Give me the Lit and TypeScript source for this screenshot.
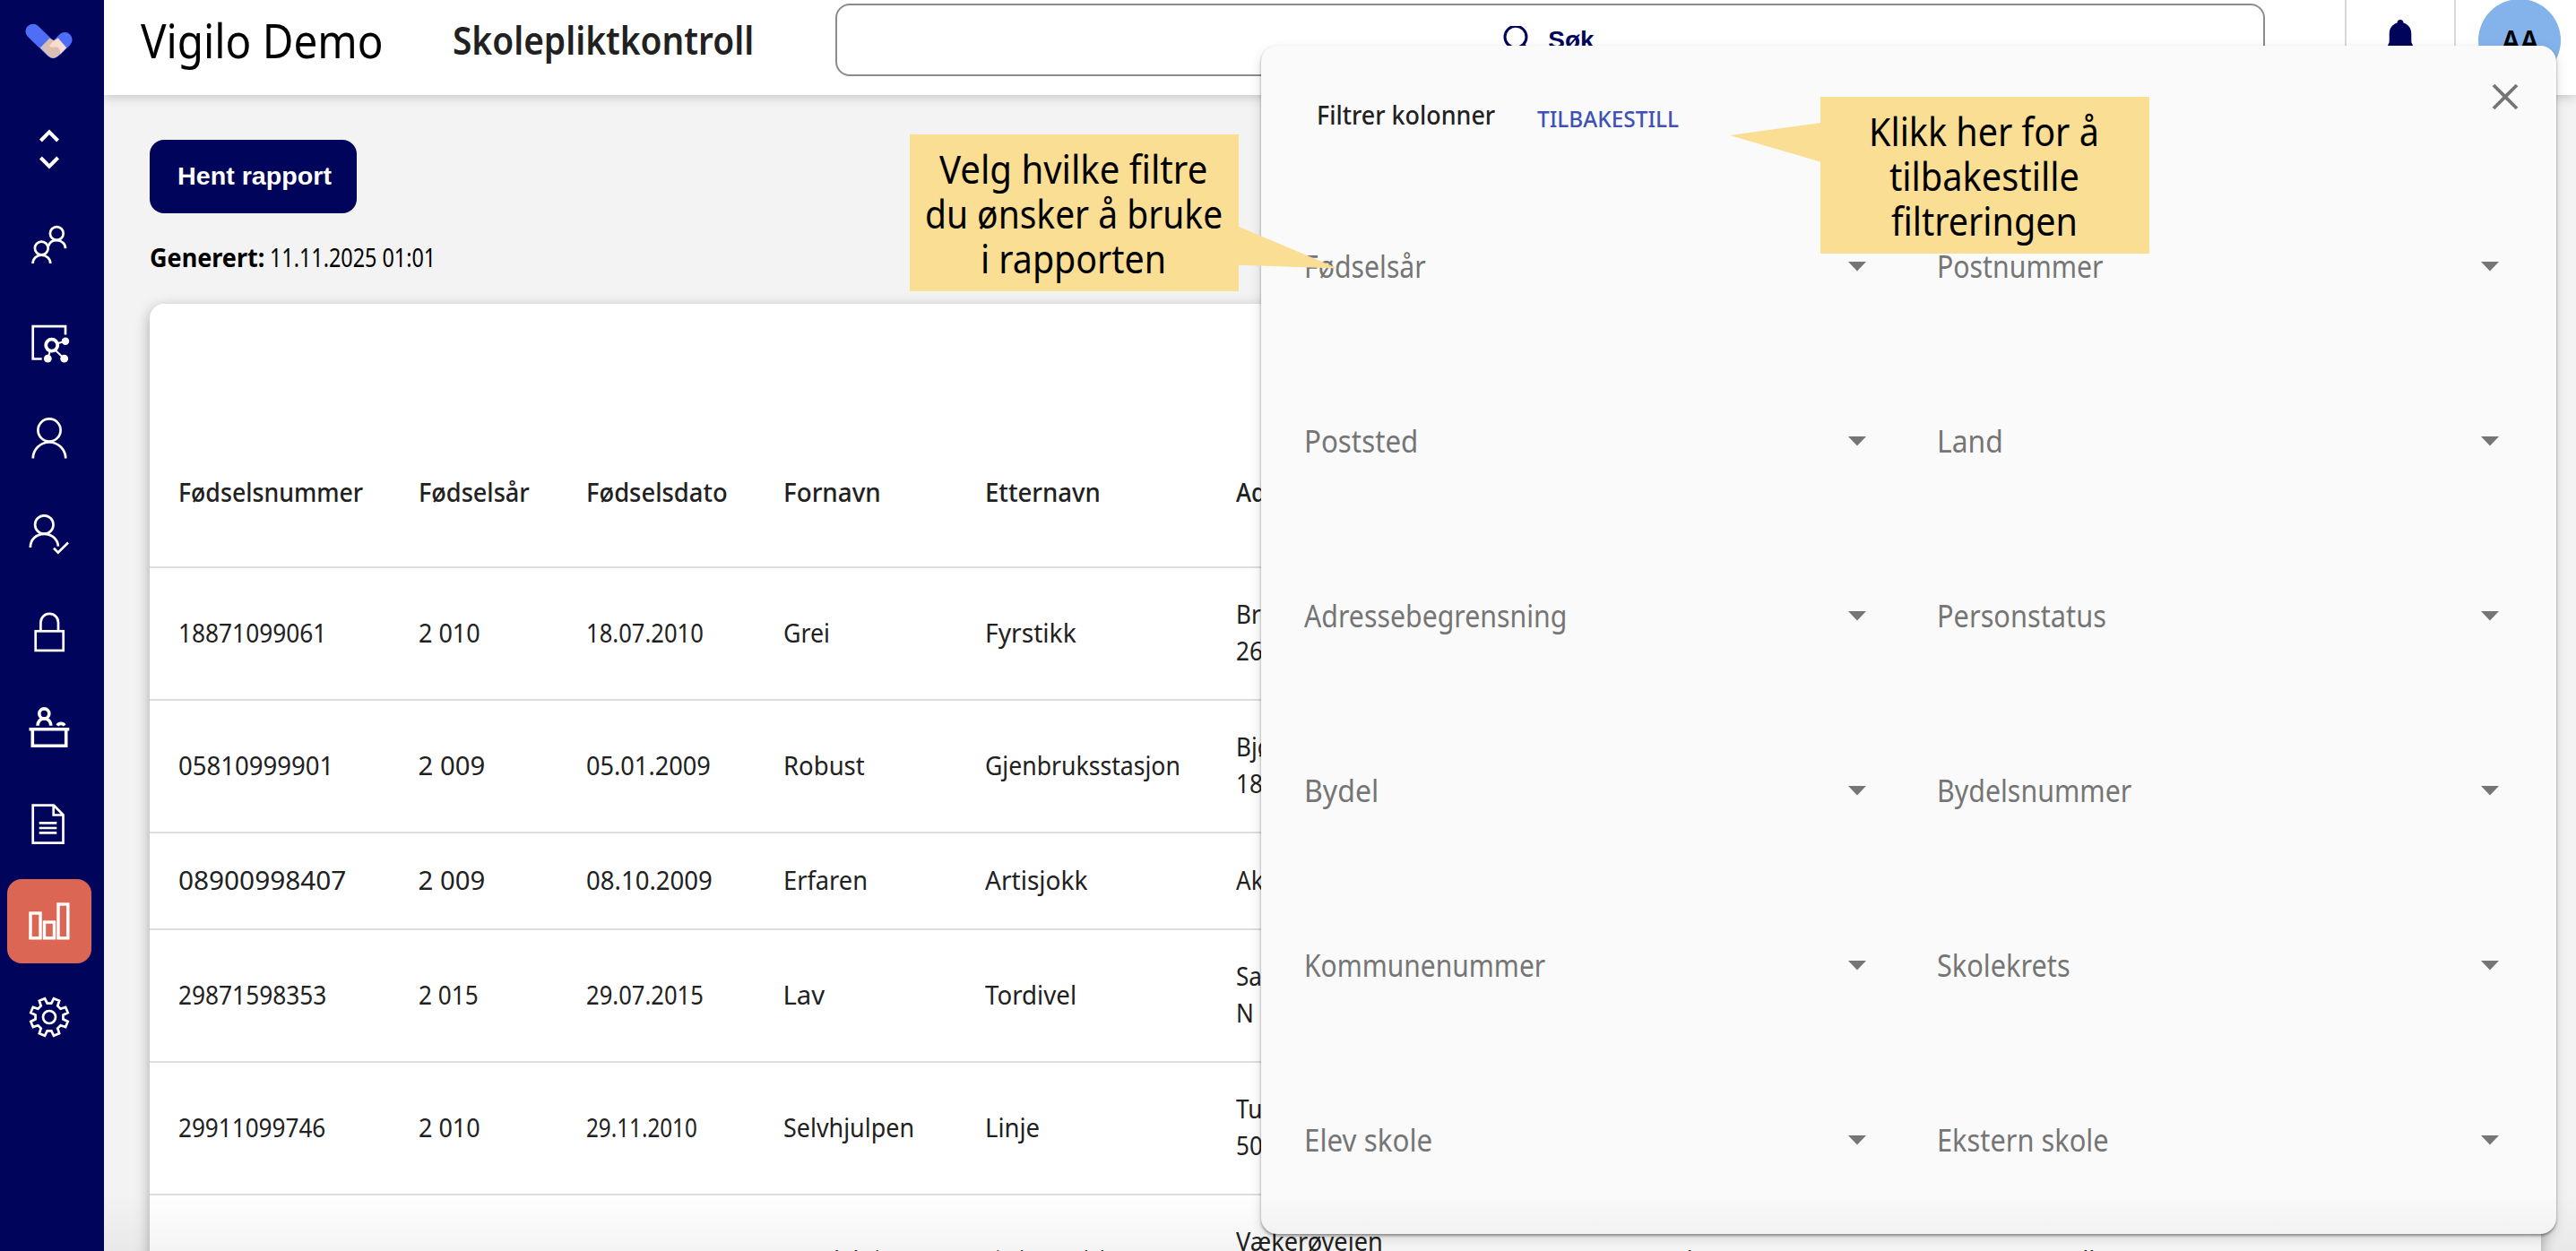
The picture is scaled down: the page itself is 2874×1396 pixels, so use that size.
import { LitElement, html, svg, css } from "lit";
import { customElement, property } from "lit/decorators.js";

const DEFAULT_CONDENSE = 0.89;

/** Text condensed horizontally so that it fills a given measure. */
@customElement("fit-text")
class FitText extends LitElement {
  @property({ type: Number }) w = 0;
  @property() text = "";

  static styles = css`
    :host {
      display: inline-block;
      white-space: nowrap;
    }
    .run {
      display: inline-block;
      white-space: pre;
      transform-origin: 0 50%;
    }
  `;

  updated() {
    const run = this.renderRoot.querySelector(".run") as HTMLElement;
    const natural = run.offsetWidth;
    const width = this.w || natural * DEFAULT_CONDENSE;
    run.style.transform = `scaleX(${width / natural})`;
    this.style.width = width + "px";
  }

  render() {
    return html`<span class="run">${this.text}</span>`;
  }
}

const fit = (text: string, w = 0) => html`<fit-text .text=${text} .w=${w}></fit-text>`;

function gearPath(): string {
  const pts: string[] = [];
  const at = (deg: number, r: number) => {
    const a = (deg * Math.PI) / 180;
    pts.push(`${(r * Math.sin(a)).toFixed(2)},${(-r * Math.cos(a)).toFixed(2)}`);
  };
  for (let k = 0; k < 8; k++) {
    const d = k * 45;
    at(d + 8.5, 15.6);
    at(d + 13.5, 21.3);
    at(d + 31.5, 21.3);
    at(d + 36.5, 15.6);
  }
  return "M" + pts.join("L") + "Z";
}

const NAV = [
  { id: "switch", art: svg`<path stroke-width="4" d="M-9.6-9 0-18.6 9.6-9M-9.6 10 0 19.6 9.6 10"/>` },
  {
    id: "groups",
    art: svg`<circle cx="8.3" cy="-13.5" r="7.4"/><path d="M18 3.2C18-2 13.6-5.8 8.3-5.8 3.4-5.8 .2-3 -1 .6"/>
      <circle cx="-8.7" cy="3" r="7.4"/><path d="M-18.4 20C-18.4 14.5-14 10.6-8.7 10.6-3.4 10.6 1.2 14.5 1.2 20"/>`,
  },
  {
    id: "network",
    art: svg`<path d="M-8.3 18.5H-18.3V-17.8H18V-8.5"/><circle cx="2.7" cy="3.2" r="6.5" stroke-width="3.8"/>
      <path stroke-width="2" d="M9 1.2 18-1.2M6.5 8.5 16.7 18.2M1 9-1.7 18.2"/>
      <g fill="#fff" stroke="none"><circle cx="18" cy="-1.2" r="4.2"/><circle cx="16.7" cy="18.2" r="4.4"/><circle cx="-1.7" cy="18.2" r="4.4"/></g>`,
  },
  { id: "person", art: svg`<circle cx="0" cy="-9" r="12.6"/><path d="M-18.2 22.5A18.2 18 0 0 1 18.2 22.5"/>` },
  {
    id: "approved",
    art: svg`<circle cx="-5.7" cy="-11.5" r="10.2"/><path d="M-21.2 14C-21.2 5-14.5-1.2-5.7-1.2 3-1.2 9.2 5 10 12.6M5 14.8 9.8 19.7 21 8.5"/>`,
  },
  {
    id: "lock",
    art: svg`<rect x="-15.3" y="-.7" width="31" height="21.6"/><path d="M-9.6-1V-10.3A9.8 9.8 0 0 1 10-10.3V-1"/>`,
  },
  {
    id: "desk",
    art: svg`<g stroke-width="3.6"><circle cx="-5.7" cy="-15.6" r="5.5"/><path d="M-13-2.3A7.4 8 0 0 1 1.8-2.3M9-2.3A4.6 4.6 0 0 1 17-2.3"/>
      <path d="M-22.5 1.7H22.3M-18.7 2V20.2H18.7V2"/></g>`,
  },
  {
    id: "document",
    art: svg`<path d="M-18.3-21.3H5L15.5-10.8V20.7H-18.3ZM4.7-21V-10.5H15.5"/><path d="M-11.3-1.7H8.3M-11.3 4H8.3M-11.3 9.4H8.3"/>`,
  },
  {
    id: "reports",
    active: true,
    art: svg`<g stroke-width="3.4"><rect x="-21" y="-9" width="11" height="27.8"/><rect x="-5.5" y="1" width="11" height="17.8"/><rect x="10" y="-19" width="10.8" height="37.8"/></g>`,
  },
  { id: "settings", art: svg`<path d=${gearPath()}/><circle r="7"/>` },
];

type Cell = [string, number?];
const HEAD: Cell[] = [["Fødselsnummer", 206], ["Fødselsår", 124], ["Fødselsdato", 158], ["Fornavn", 109], ["Etternavn", 129], ["Adr."]];

interface Row { cells: Cell[]; address: Cell[]; extra?: Cell[]; short?: boolean; }
const ROWS: Row[] = [
  { cells: [["18871099061", 165], ["2 010", 69], ["18.07.2010", 131], ["Grei", 52], ["Fyrstikk", 102]], address: [["Bråte"], ["26"]] },
  { cells: [["05810999901", 173], ["2 009", 75], ["05.01.2009", 139], ["Robust", 91], ["Gjenbruksstasjon", 218]], address: [["Bjørk"], ["18"]] },
  { cells: [["08900998407", 187], ["2 009", 75], ["08.10.2009", 141], ["Erfaren", 94], ["Artisjokk", 115]], address: [["Aker"]], short: true },
  { cells: [["29871598353", 165], ["2 015", 67], ["29.07.2015", 131], ["Lav", 47], ["Tordivel", 102]], address: [["Sag"], ["N"]] },
  { cells: [["29911099746", 164], ["2 010", 69], ["29.11.2010", 124], ["Selvhjulpen", 146], ["Linje", 61]], address: [["Tun"], ["50"]] },
  {
    cells: [["07281598060", 166], ["2 015", 67], ["07.08.2015", 131], ["Snodaktig", 124], ["Lindemandel", 134]],
    address: [["Vækerøveien", 164], ["205"]],
    extra: [["0283", 60], ["Oslo", 52], ["Norge", 74], ["Ullern", 78], ["Bosatt", 82]],
  },
];

const FILTERS: Cell[] = [
  ["Fødselsår", 136], ["Postnummer", 186], ["Poststed", 127], ["Land", 74], ["Adressebegrensning", 293], ["Personstatus", 189],
  ["Bydel", 83], ["Bydelsnummer", 217], ["Kommunenummer", 269], ["Skolekrets", 149], ["Elev skole", 143], ["Ekstern skole", 192],
];

@customElement("app-root")
class AppRoot extends LitElement {
  static styles = css`
    :host {
      display: block;
      position: relative;
      width: 2874px;
      height: 1396px;
      overflow: hidden;
      background: #f3f3f3;
      color: #212121;
      font-family: "Noto Sans", "Open Sans", sans-serif;
      font-size: 29.3px;
      line-height: 40px;
    }
    * { box-sizing: border-box; }
    .shell { display: flex; height: 1396px; }

    .sidebar {
      flex: none;
      width: 116px;
      padding-right: 6px;
      background: #00055b;
      display: flex;
      flex-direction: column;
      align-items: center;
      z-index: 2;
    }
    .logo { display: block; width: 60px; height: 112.3px; }
    .nav { width: 94px; height: 107.7px; display: flex; align-items: center; justify-content: center; }
    .tile { width: 94px; height: 94px; border-radius: 16px; display: flex; align-items: center; justify-content: center; }
    .tile.active { background: #db6654; }
    .tile svg { width: 48px; height: 48px; fill: none; stroke: #fff; stroke-width: 2.7; overflow: visible; }

    .page { flex: 1; min-width: 0; display: flex; flex-direction: column; }
    .topbar {
      flex: none;
      height: 106px;
      padding: 0 16px 17px 41px;
      background: #fff;
      display: flex;
      align-items: center;
      box-shadow: 0 2px 12px rgba(0, 0, 0, 0.2);
      z-index: 1;
    }
    .brand { width: 348px; font-size: 53px; line-height: 60px; color: #000; }
    .heading { width: 427px; font-size: 43px; line-height: 60px; font-weight: 600; }
    .search {
      width: 1595px;
      height: 81px;
      border: 2px solid #8b8b8b;
      border-radius: 16px;
      display: flex;
      align-items: center;
      justify-content: center;
      gap: 19px;
      padding-right: 4px;
      font: 700 28px/40px "Liberation Sans", Arial, sans-serif;
      color: #00055b;
    }
    .search svg { width: 32px; height: 32px; }
    .bell-slot {
      margin-left: 89px;
      width: 124px;
      align-self: stretch;
      margin-bottom: -10px;
      padding-top: 21px;
      border-left: 2px solid #d8d8d8;
      border-right: 2px solid #d8d8d8;
      display: flex;
      justify-content: center;
    }
    .bell-slot svg { width: 34px; height: 42px; }
    .avatar {
      margin-left: 25px;
      width: 92px;
      height: 92px;
      border-radius: 50%;
      background: #84b3ec;
      color: #000;
      font-weight: 600;
      font-size: 33px;
      display: flex;
      align-items: center;
      justify-content: center;
    }

    .content { flex: 1; min-height: 0; padding: 50px 39px 0 50.5px; }
    .report {
      display: block;
      width: 231px;
      height: 82px;
      padding: 0;
      border: 0;
      border-radius: 16px;
      background: #00055b;
      color: #fff;
      font: 700 28px/40px "Liberation Sans", Arial, sans-serif;
    }
    .stamp { display: flex; gap: 6px; margin-top: 29px; color: #000; }
    .stamp .key { font-weight: 700; }
    .card {
      margin-top: 32px;
      height: 1100px;
      padding-top: 127px;
      background: #fff;
      border-radius: 16px;
      box-shadow: 0 5px 16px rgba(0, 0, 0, 0.32);
    }
    .row {
      display: grid;
      grid-template-columns: 268px 187px 220px 225px 280px 242px 230px 176px 276px 214px 1fr;
      align-items: center;
      height: 148px;
      padding: 0 0 2px 32px;
      border-bottom: 2px solid #dedede;
    }
    .row.short { height: 108px; }
    .row.head { height: 168px; padding-bottom: 0; font-weight: 500; }
    .lines { display: flex; flex-direction: column; line-height: 41px; }

    .panel {
      position: absolute;
      left: 1407px;
      top: 51px;
      width: 1445px;
      height: 1326px;
      border-radius: 18px;
      background: #fafafa;
      box-shadow: 0 2px 3px rgba(0, 0, 0, 0.38), 0 5px 14px rgba(0, 0, 0, 0.14);
      z-index: 3;
    }
    .panel-head { display: flex; height: 148px; padding: 57px 40px 0 62px; }
    .panel-title { width: 246px; font-weight: 500; }
    .reset { margin-top: 4px; font-size: 25px; font-weight: 500; color: #3f51b5; }
    .close { margin-left: auto; margin-top: -17px; width: 34px; height: 34px; }
    .filters { display: grid; grid-template-columns: 627px 627px; column-gap: 79px; padding-left: 48px; }
    .filter {
      height: 195px;
      display: flex;
      align-items: center;
      justify-content: space-between;
      color: #757575;
      font-size: 34px;
      line-height: 50px;
    }
    .arrow { width: 20px; height: 11px; margin-top: 2px; }

    .callout {
      position: absolute;
      z-index: 5;
      width: 367px;
      height: 175px;
      padding: 13px 2px 0 0;
      background: #f9de93;
      color: #000;
      font-size: 43.5px;
      line-height: 50.2px;
      display: flex;
      flex-direction: column;
      align-items: center;
    }
    .callout.pick { left: 1015px; top: 150px; }
    .callout.clear { left: 2031px; top: 108px; }
    .tail { position: absolute; overflow: visible; fill: #f9de93; width: 113px; height: 50px; }
    .pick .tail { left: 366px; top: 102px; }
    .clear .tail { left: -101px; top: 29px; }
    .fade {
      position: absolute;
      left: 116px;
      right: 0;
      bottom: 0;
      height: 66px;
      z-index: 4;
      background: linear-gradient(rgba(0, 0, 0, 0), rgba(0, 0, 0, 0.045));
    }
  `;

  private row(r: Row) {
    return html`<div class="row ${r.short ? "short" : ""}">
      ${r.cells.map(([t, w]) => html`<div>${fit(t, w)}</div>`)}
      <div class="lines">${r.address.map(([t, w]) => fit(t, w))}</div>
      ${(r.extra ?? []).map(([t, w]) => html`<div>${fit(t, w)}</div>`)}
    </div>`;
  }

  render() {
    return html`
      <div class="shell">
        <nav class="sidebar">
          <svg class="logo" viewBox="25 0 60 112.3">
            <path d="M36.8 35 59.3 56.7" stroke="#4f6ef7" stroke-width="16.6" stroke-linecap="round" />
            <path d="M72.3 44.3 62 54.6" stroke="#4f6ef7" stroke-width="16.6" stroke-linecap="round" />
            <path d="M55.2 42.8 45 53.2 53.2 61.8Q59.3 68 65.5 61.8L72 55 62 46Z" fill="#dcbfb4" />
            <path d="M64.8 42.5 74.2 53.3 67 60.4Q68.3 52.5 62 52.2 57.5 54 55 51L59.8 45.8Z" fill="#f9dccb" />
          </svg>
          ${NAV.map(
            (n) => html`<a class="nav"><span class="tile ${n.active ? "active" : ""}"><svg viewBox="-24 -24 48 48">${n.art}</svg></span></a>`
          )}
        </nav>
        <div class="page">
          <header class="topbar">
            <div class="brand">${fit("Vigilo Demo", 270)}</div>
            <div class="heading">${fit("Skolepliktkontroll", 336)}</div>
            <div class="search">
              <svg viewBox="0 0 32 32" fill="none" stroke="#00055b" stroke-width="3">
                <circle cx="15" cy="12.2" r="12" /><path d="M23.5 20.7 31 28.2" />
              </svg>
              <span>Søk</span>
            </div>
            <div class="bell-slot">
              <svg viewBox="0 0 34 42" fill="#00055b">
                <path d="M17 1C19.3 1 20.5 2.6 20.5 4.6 26.5 6.5 29.3 11 29.3 17V26L32 32H2L4.7 26V17C4.7 11 7.5 6.5 13.5 4.6 13.5 2.6 14.7 1 17 1ZM12 35H22A5 5 0 0 1 12 35Z" />
              </svg>
            </div>
            <div class="avatar">${fit("AA", 41)}</div>
          </header>
          <main class="content">
            <button class="report">${fit("Hent rapport", 172)}</button>
            <div class="stamp"><span class="key">${fit("Generert:", 128)}</span>${fit("11.11.2025 01:01", 185)}</div>
            <section class="card">
              <div class="row head">${HEAD.map(([t, w]) => html`<div>${fit(t, w)}</div>`)}</div>
              ${ROWS.map((r) => this.row(r))}
            </section>
          </main>
        </div>
      </div>
      <aside class="panel">
        <div class="panel-head">
          <div class="panel-title">${fit("Filtrer kolonner", 199)}</div>
          <div class="reset">${fit("TILBAKESTILL", 158)}</div>
          <svg class="close" viewBox="0 0 34 34" stroke="#757575" stroke-width="3.8"><path d="M4 4 30 30M30 4 4 30" /></svg>
        </div>
        <div class="filters">
          ${FILTERS.map(
            ([t, w]) => html`<div class="filter">${fit(t, w)}<svg class="arrow" viewBox="0 0 20 11" fill="#757575"><path d="M0 0H20L10 10.5Z" /></svg></div>`
          )}
        </div>
      </aside>
      <div class="fade"></div>
      <div class="callout pick">
        ${fit("Velg hvilke filtre", 299)}${fit("du ønsker å bruke", 332)}${fit("i rapporten", 207)}
        <svg class="tail" viewBox="0 0 113 50"><path d="M0 .5 111.5 47.5 0 43.7Z" /></svg>
      </div>
      <div class="callout clear">
        ${fit("Klikk her for å", 257)}${fit("tilbakestille", 212)}${fit("filtreringen", 208)}
        <svg class="tail" viewBox="0 0 113 50"><path d="M101.5 0 0 14 101.5 43.7Z" /></svg>
      </div>
    `;
  }
}
